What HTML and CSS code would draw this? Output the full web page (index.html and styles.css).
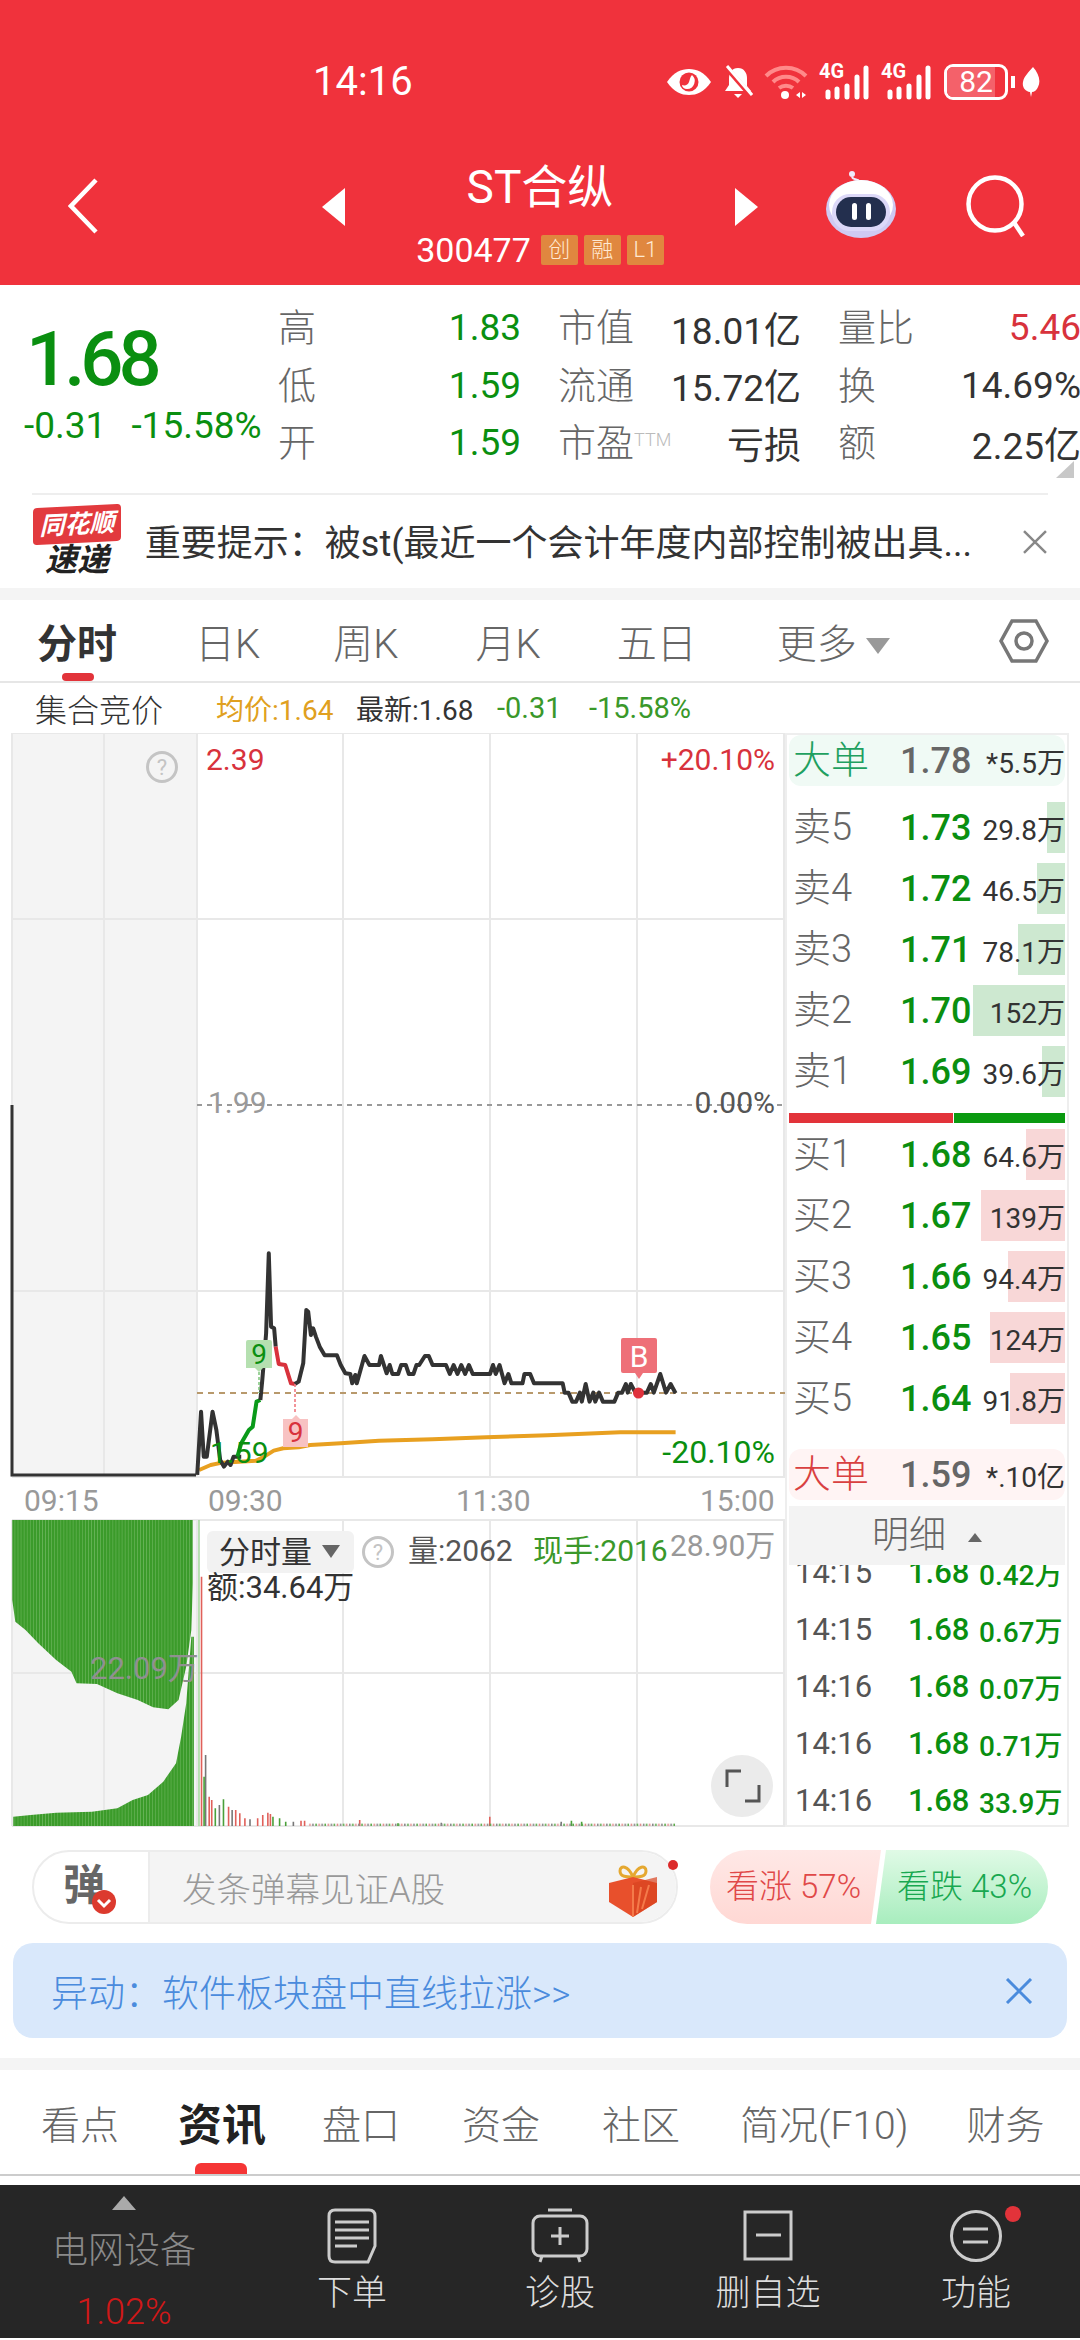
FILE: index.html
```html
<!DOCTYPE html>
<html lang="zh-CN">
<head>
  <meta charset="UTF-8" />
  <title>ST合纵 300477</title>
  <link rel="stylesheet" href="styles.css">
</head>
<body>

  <header class="top">
    <div class="status">
      <span class="clock">14:16</span>
      <div class="status-icons">
        <svg width="46" height="28" viewBox="0 0 46 28"><path d="M1 14C8 4 15 1 23 1s15 3 22 13c-7 10-14 13-22 13S8 24 1 14z" fill="#fff"/><circle cx="23" cy="14" r="9.5" fill="#f0323c"/><path d="M26 7a8 8 0 0 1-5 14c-3 0-5-2-5-4 3 1 6 0 7-3s1-5 3-7z" fill="#fff"/></svg>
        <svg width="30" height="34" viewBox="0 0 30 34"><path d="M15 3c6 0 9 5 9 10v8l4 5H2l4-6v-7c0-5 3-10 9-10z" fill="#fff"/><path d="M11 29h8l-4 4z" fill="#fff"/><path d="M2 1l27 31" stroke="#f0323c" stroke-width="5"/><path d="M4 1l25 29" stroke="#fff" stroke-width="3"/></svg>
        <svg width="44" height="34" viewBox="0 0 44 34"><g fill="none" stroke="#ff8a8a" stroke-width="4"><path d="M2 11c11-11 29-11 40 0"/><path d="M9 17c7-7 19-7 26 0"/><path d="M15 23c4-3 10-3 14 0"/></g><circle cx="21" cy="30" r="4" fill="#fff"/><path d="M32 30l4-3v6zM38 27l4 3-4 3z" fill="#fff"/></svg>
        <div class="signal"><span class="net">4G</span><svg width="51" height="36" viewBox="0 0 51 36"><g stroke="#fff" stroke-width="5" stroke-linecap="round"><path d="M9 28v5M18 25v8M28 22v11M38 13v20M47 4v29"/></g></svg></div>
        <div class="signal"><span class="net">4G</span><svg width="51" height="36" viewBox="0 0 51 36"><g stroke="#fff" stroke-width="5" stroke-linecap="round"><path d="M9 28v5M18 25v8M28 22v11M38 13v20M47 4v29"/></g></svg></div>
        <div class="battery"><span class="battery-fill"></span><span class="battery-num">82</span></div>
        <span class="battery-nub"></span>
        <svg width="18" height="30" viewBox="0 0 18 30"><path d="M11 0c6 7 8 14 5 20-1 3-4 5-6 5l-1 5-1-5C3 24 0 20 1 15 2 9 7 5 11 0z" fill="#fff"/></svg>
      </div>
    </div>
    <div class="nav">
      <svg class="nav-back" width="30" height="56" viewBox="0 0 30 56"><path d="M28 2L3 28l25 26" fill="none" stroke="#fff" stroke-width="4.5"/></svg>
      <span class="tri-left"></span>
      <div class="nav-title">
        <div class="stock-name">ST合纵</div>
        <div class="stock-code">300477<span class="tag">创</span><span class="tag">融</span><span class="tag">L1</span></div>
      </div>
      <span class="tri-right"></span>
      <svg class="robot" width="72" height="68" viewBox="0 0 72 68"><path d="M34 11c-1-2-6-1-7-4" fill="none" stroke="#efeafc" stroke-width="2"/><circle cx="27" cy="4" r="3" fill="#efeafc"/><ellipse cx="36" cy="39" rx="35" ry="29" fill="#cfcaf2"/><ellipse cx="36" cy="35" rx="32" ry="25" fill="#fff"/><rect x="7" y="24" width="58" height="37" rx="18" fill="#dcd8f8"/><rect x="11" y="27" width="50" height="30" rx="15" fill="#232f4e"/><rect x="27" y="33" width="5" height="17" rx="2.500" fill="#fff"/><rect x="41" y="33" width="5" height="17" rx="2.500" fill="#fff"/></svg>
      <svg class="search" width="60" height="62" viewBox="0 0 60 62"><circle cx="29" cy="29" r="26.5" fill="none" stroke="#fff" stroke-width="4.5"/><path d="M47 46l10 15" stroke="#fff" stroke-width="4.5"/></svg>
    </div>
  </header>

  <section class="quote">
    <div class="quote-main">
      <div class="last-price">1.68</div>
      <div class="last-change"><span>-0.31</span><span>-15.58%</span></div>
    </div>
    <div class="quote-grid">
      <div class="cell"><span>高</span><b class="green">1.83</b></div>
      <div class="cell"><span>市值</span><b>18.01亿</b></div>
      <div class="cell"><span>量比</span><b class="red">5.46</b></div>
      <div class="cell"><span>低</span><b class="green">1.59</b></div>
      <div class="cell"><span>流通</span><b>15.72亿</b></div>
      <div class="cell"><span>换</span><b>14.69%</b></div>
      <div class="cell"><span>开</span><b class="green">1.59</b></div>
      <div class="cell"><span>市盈<sup class="ttm">TTM</sup></span><b>亏损</b></div>
      <div class="cell"><span>额</span><b>2.25亿</b></div>
    </div>
    <span class="corner"></span>
  </section>

  <section class="notice">
    <div class="notice-logo">
      <div class="logo-top">同花顺</div>
      <div class="logo-bottom">速递</div>
    </div>
    <div class="notice-text">重要提示：被st(最近一个会计年度内部控制被出具...</div>
    <svg width="26" height="24" viewBox="0 0 26 24"><path d="M2 1l22 22M24 1L2 23" stroke="#888" stroke-width="2.5"/></svg>
  </section>

  <nav class="period-tabs">
    <span class="period active">分时</span>
    <span class="period w-ri">日K</span>
    <span class="period w-zhou">周K</span>
    <span class="period w-yue">月K</span>
    <span class="period w-wu">五日</span>
    <span class="period w-more">更多<i class="more-arrow"></i></span>
    <svg class="hex" width="50" height="46" viewBox="0 0 50 46"><path d="M13 3h24l11 20-11 20H13L2 23z" fill="none" stroke="#777" stroke-width="3.5"/><circle cx="25" cy="23" r="8" fill="none" stroke="#777" stroke-width="3.5"/></svg>
  </nav>

  <div class="auction-row">
    <span class="auction-title">集合竞价</span>
    <span class="avg">均价:1.64</span>
    <span class="latest">最新:1.68</span>
    <span class="chg-a">-0.31</span>
    <span class="chg-b">-15.58%</span>
  </div>

  <main class="board">
    <div class="chart">
      <svg class="chart-svg" viewBox="0 733 785 1094" width="785" height="1094">
        <defs>
          <pattern id="stripes" patternUnits="userSpaceOnUse" width="6" height="10">
            <rect width="6" height="10" fill="#6fb85f"/>
            <rect width="4.8" height="10" fill="#3b9b2a"/>
          </pattern>
          <pattern id="lowbars" patternUnits="userSpaceOnUse" width="18" height="10">
            <rect x="0" width="3" height="10" fill="#888"/>
            <rect x="6" width="3" height="10" fill="#5aa84a"/>
            <rect x="12" width="3" height="10" fill="#e08a8a"/>
          </pattern>
        </defs>

        <rect x="12" y="733" width="185" height="744" fill="#f4f4f4"/>
        <rect x="12" y="1520" width="185" height="306" fill="#f4f4f4"/>
        <g class="grid">
          <path d="M12 733H785M12 919H785M197 1291H785M12 1291H197M12 1477H785M12 1520H785M12 1673H785M12 1826H785"/>
          <path d="M104 733V1477M197 733V1477M343 733V1477M490 733V1477M637 733V1477M784 733V1477"/>
          <path d="M104 1520V1826M197 1520V1826M343 1520V1826M490 1520V1826M637 1520V1826M784 1520V1826"/>
          <path d="M12 733V1477M12 1520V1826"/>
        </g>
        <path class="zero-line" d="M197 1105H785"/>
        <path class="open-line" d="M197 1393H785"/>
        <path class="pre-line" d="M12 1105V1475H196"/>

        <g transform="translate(180 1200) scale(.3827 .3333)">
          <polyline class="line-avg" points="50,810 80,795 110,788 200,782 220,770 245,752 270,745 310,742 340,735 420,730 520,722 660,718 800,712 960,706 1040,702 1150,697 1295,697"/>
          <polyline class="line-price" points="45,825 55,635 62,770 70,770 85,635 95,690 105,780 115,800 125,785 132,795 140,770 160,770"/>
          <polyline class="line-green" points="150,770 160,730 180,690 190,680 200,605 210,600"/>
          <polyline class="line-price" points="210,600 215,540 225,400 232,160 238,380 246,385 250,440"/>
          <polyline class="line-red" points="250,440 258,492 275,495 290,550 300,552"/>
          <polyline class="line-price" points="300,552 310,545 322,490 330,330 335,335 342,405 348,385 355,410 365,440 378,466 410,466 420,495 432,520 445,522 450,550 458,525 462,550 482,468 495,495 520,495 525,468 540,520 548,495 555,522 570,522 578,495 590,495 598,522 610,522 618,495 625,495 640,468 650,468 660,495 695,495 705,522 715,495 725,522 735,495 745,522 755,495 765,522 810,522 818,495 825,522 835,495 848,550 858,522 866,550 895,550 900,522 915,522 925,550 1000,550 1005,578 1015,578 1025,605 1035,605 1045,578 1050,605 1060,552 1070,605 1080,578 1085,605 1095,578 1105,605 1135,605 1145,578 1155,578 1165,552 1170,578 1178,552 1190,578 1220,578 1230,552 1238,578 1255,522 1270,578 1282,552 1295,580"/>
        </g>

        <path class="tick-green" d="M259 1372V1393"/>
        <path class="tick-red" d="M295 1384V1412"/>
        <path d="M246 1342q0-2 2-2h22q2 0 2 2v26h-9l-4 4-4-4h-9z" fill="#b5e0b0"/>
        <text class="t-tag green-t" x="259" y="1364">9</text>
        <path d="M283 1419h9l4-4 4 4h8v28h-25z" fill="#f8c2c2"/>
        <text class="t-tag red-t" x="295.500" y="1442">9</text>
        <path d="M621 1340q0-2 2-2h32q2 0 2 2v31q0 2-2 2h-12l-4 6-4-6h-12q-2 0-2-2z" fill="#ee7078"/>
        <text class="t-b" x="639" y="1367">B</text>
        <circle cx="638.500" cy="1393" r="5.500" fill="#e0323c"/>

        <circle class="help" cx="162" cy="767" r="14.500"/>
        <text class="t-help" x="162" y="775">?</text>
        <text class="t-price red-t" x="206" y="770">2.39</text>
        <text class="t-price red-t end" x="775" y="770">+20.10%</text>
        <text class="t-price gray-t" x="208" y="1113">1.99</text>
        <text class="t-price dark-t end" x="775" y="1113">0.00%</text>
        <text class="t-price green-t" x="210" y="1463">1.59</text>
        <text class="t-price t-wide green-t end" x="775" y="1463">-20.10%</text>

        <text class="t-axis" x="24" y="1511">09:15</text>
        <text class="t-axis" x="208" y="1511">09:30</text>
        <text class="t-axis" x="456" y="1511">11:30</text>
        <text class="t-axis" x="700" y="1511">15:00</text>

        <g transform="translate(0 1480) scale(.5102 .3333)">
          <path fill="url(#stripes)" d="M24 120H378V310L375 450 365 560 350 660 330 688 300 682 270 660 230 640 190 612 150 610 140 575 110 540 75 490 50 450 30 425 24 360z"/>
          <path fill="url(#stripes)" d="M26 1010L60 1005 110 998 180 995 230 985 260 960 290 945 320 905 345 850 355 770 365 670 375 470 380 470V1038H26z"/>
          <path class="bar-line" stroke="#a8d8a0" d="M390 120V1038"/>
          <path class="bar-line" stroke="#e0605a" d="M395 290V1038M410 950V1038M415 960V1038M448 980V1038M462 990V1038M470 1000V1038M480 1015V1038M505 1015V1038M515 1005V1038M525 998V1038M530 1002V1038M590 1022V1038M597 1022V1038M705 1020V1038M960 1010V1038"/>
          <path class="bar-line" stroke="#777" d="M403 825V1038M430 975V1038M455 990V1038M490 1018V1038M575 1025V1038M865 1028V1038M1100 1025V1038"/>
          <path class="bar-line" stroke="#4aa03a" d="M400 890V1038M422 985V1038M438 958V1038M535 1010V1038M548 1015V1038M560 1025V1038M780 1030V1038M1120 1022V1038M1140 1025V1038"/>
          <rect x="605" y="1031" width="720" height="7" fill="url(#lowbars)"/>
        </g>

        <text class="t-over" x="90" y="1679">22.09万</text>
        <rect class="chip" x="207" y="1531" width="147" height="42" rx="6"/>
        <text class="t-vol" x="219" y="1563">分时量</text>
        <path d="M322 1545h18l-9 13z" fill="#666"/>
        <circle class="help" cx="378" cy="1552" r="14.500"/>
        <text class="t-help" x="378" y="1560">?</text>
        <text class="t-small" x="408" y="1561">量:2062</text>
        <text class="t-small t-green" x="533" y="1561">现手:2016</text>
        <text class="t-small gray-t" x="670" y="1556">28.90万</text>
        <text class="t-vol" x="207" y="1598">额:34.64万</text>

        <circle cx="742" cy="1786" r="31" fill="#ebebeb"/>
        <path class="expand" d="M727 1787V1771H741M759 1785V1801H745"/>
      </svg>
    </div>

    <aside class="book">
      <div class="big-order big-green"><span class="lab">大单</span><span class="px gray">1.78</span><span class="vol">*5.5万</span></div>

      <div class="sell-list">
        <div class="level"><i class="bar bar-sell" style="width:18px"></i><span class="lab">卖5</span><span class="px">1.73</span><span class="vol">29.8万</span></div>
        <div class="level"><i class="bar bar-sell" style="width:28px"></i><span class="lab">卖4</span><span class="px">1.72</span><span class="vol">46.5万</span></div>
        <div class="level"><i class="bar bar-sell" style="width:47px"></i><span class="lab">卖3</span><span class="px">1.71</span><span class="vol">78.1万</span></div>
        <div class="level"><i class="bar bar-sell" style="width:92px"></i><span class="lab">卖2</span><span class="px">1.70</span><span class="vol">152万</span></div>
        <div class="level"><i class="bar bar-sell" style="width:23px"></i><span class="lab">卖1</span><span class="px">1.69</span><span class="vol">39.6万</span></div>
      </div>

      <div class="ratio"><span class="ratio-red"></span><span class="ratio-green"></span></div>

      <div class="buy-list">
        <div class="level"><i class="bar bar-buy" style="width:39px"></i><span class="lab">买1</span><span class="px">1.68</span><span class="vol">64.6万</span></div>
        <div class="level"><i class="bar bar-buy" style="width:84px"></i><span class="lab">买2</span><span class="px">1.67</span><span class="vol">139万</span></div>
        <div class="level"><i class="bar bar-buy" style="width:57px"></i><span class="lab">买3</span><span class="px">1.66</span><span class="vol">94.4万</span></div>
        <div class="level"><i class="bar bar-buy" style="width:75px"></i><span class="lab">买4</span><span class="px">1.65</span><span class="vol">124万</span></div>
        <div class="level"><i class="bar bar-buy" style="width:55px"></i><span class="lab">买5</span><span class="px">1.64</span><span class="vol">91.8万</span></div>
      </div>

      <div class="big-order big-red"><span class="lab">大单</span><span class="px gray">1.59</span><span class="vol">*.10亿</span></div>
      <div class="detail-head">明细<i class="detail-arrow"></i></div>

      <div class="ticks">
        <div class="tick"><span class="tm">14:15</span><span class="tp">1.68</span><span class="tv">0.42万</span></div>
        <div class="tick"><span class="tm">14:15</span><span class="tp">1.68</span><span class="tv">0.67万</span></div>
        <div class="tick"><span class="tm">14:16</span><span class="tp">1.68</span><span class="tv">0.07万</span></div>
        <div class="tick"><span class="tm">14:16</span><span class="tp">1.68</span><span class="tv">0.71万</span></div>
        <div class="tick"><span class="tm">14:16</span><span class="tp">1.68</span><span class="tv">33.9万</span></div>
      </div>
    </aside>
  </main>

  <section class="danmu-row">
    <div class="danmu">
      <div class="danmu-left">
        <span class="danmu-char">弹</span>
        <svg class="danmu-check" width="24" height="24" viewBox="0 0 24 24"><circle cx="12" cy="12" r="12" fill="#dc3a2e"/><path d="M6 10l6 6 6-6" fill="none" stroke="#fff" stroke-width="3"/></svg>
      </div>
      <div class="danmu-input">
        <span>发条弹幕见证A股</span>
        <svg width="50" height="52" viewBox="0 0 50 52"><path d="M25 12C20 0 12 0 12 6s7 6 13 6c6 0 13 0 13-6s-8-6-13 6z" fill="none" stroke="#e5a830" stroke-width="3"/><path d="M1 18l24-6 24 6v19L25 52 1 37z" fill="#e8502c"/><path d="M25 18l24-6v25L25 52z" fill="#d8431f" opacity=".7"/><path d="M25 20v32M33 22l-4 26M41 20l-7 24" stroke="#f47a4a" stroke-width="2"/></svg>
      </div>
      <span class="danmu-dot"></span>
    </div>
    <div class="vote">
      <span class="vote-up">看涨 57%</span>
      <span class="vote-down">看跌 43%</span>
    </div>
  </section>

  <section class="alert">
    <span>异动：软件板块盘中直线拉涨&gt;&gt;</span>
    <svg width="28" height="26" viewBox="0 0 28 26"><path d="M2 1l24 24M26 1L2 25" stroke="#4a8bdd" stroke-width="3"/></svg>
  </section>

  <nav class="info-tabs">
    <span class="info t-a">看点</span>
    <span class="info t-b-tab active">资讯</span>
    <span class="info t-c">盘口</span>
    <span class="info t-d">资金</span>
    <span class="info t-e">社区</span>
    <span class="info t-f">简况(F10)</span>
    <span class="info t-g">财务</span>
  </nav>

  <footer class="bottom">
    <div class="sector">
      <span class="sector-arrow"></span>
      <span class="sector-name">电网设备</span>
      <span class="sector-pct">1.02%</span>
    </div>
    <div class="action">
      <svg width="50" height="56" viewBox="0 0 50 56"><path class="ic" d="M8 2h34q6 0 6 6v30l-7 16H8q-6 0-6-6V8q0-6 6-6z"/><path class="ic" d="M8 14h34M8 22h34M8 30h34M8 38h22"/></svg>
      <span>下单</span>
    </div>
    <div class="action">
      <svg width="60" height="56" viewBox="0 0 60 56"><path class="ic" d="M18 2h24"/><rect class="ic" x="3" y="8" width="54" height="40" rx="7"/><path class="ic" d="M30 19v18M21 28h18M12 48l-2 6M48 48l2 6"/></svg>
      <span>诊股</span>
    </div>
    <div class="action">
      <svg width="50" height="56" viewBox="0 0 50 56"><rect class="ic" x="2" y="4" width="46" height="47"/><path class="ic" d="M13 27h25"/></svg>
      <span>删自选</span>
    </div>
    <div class="action">
      <svg width="54" height="56" viewBox="0 0 54 56"><circle class="ic" cx="27" cy="28" r="24.500"/><path class="ic" d="M14 21h25M14 34h25"/></svg>
      <span>功能</span>
      <i class="action-dot"></i>
    </div>
  </footer>

</body>
</html>
```

FILE: styles.css
```css
* {
  box-sizing: border-box;
}
html, body {
  margin: 0;
  padding: 0;
}
body {
  width: 1080px;
  height: 2340px;
  overflow: hidden;
  background: #fff;
  font-family: Roboto, "Noto Sans CJK SC", sans-serif;
  color: #333;
}

/* header */
.top {
  height: 285px;
  background: #f0323c;
  color: #fff;
}
.status {
  display: flex;
  align-items: center;
  height: 64px;
  padding: 50px 40px 0 313px;
  box-sizing: content-box;
}
.clock {
  font-size: 40px;
  line-height: 64px;
}
.status-icons {
  margin-left: auto;
  display: flex;
  align-items: center;
  gap: 11px;
}
.signal {
  position: relative;
  width: 51px;
  height: 36px;
}
.signal svg {
  display: block;
}
.net {
  position: absolute;
  left: 0;
  top: -3px;
  font-size: 20px;
  line-height: 20px;
  font-weight: 700;
}
.battery {
  position: relative;
  width: 64px;
  height: 36px;
  border: 3px solid #fff;
  border-radius: 9px;
  margin-left: 1px;
  text-align: center;
  overflow: hidden;
}
.battery-fill {
  position: absolute;
  left: 0;
  top: 0;
  bottom: 0;
  width: 82%;
  background: #f4616a;
}
.battery-num {
  position: relative;
  font-size: 30px;
  line-height: 30px;
  display: block;
}
.battery-nub {
  width: 4px;
  height: 12px;
  background: #fff;
  margin-left: -8px;
  margin-right: -4px;
}
.nav {
  display: flex;
  align-items: center;
  height: 171px;
  padding-left: 68px;
}
.nav-back {
  margin-top: 12px;
}
.tri-left, .tri-right {
  width: 0;
  height: 0;
  margin-top: 15px;
  border-top: 19px solid transparent;
  border-bottom: 19px solid transparent;
}
.tri-left {
  margin-left: 224px;
  border-right: 23px solid #fff;
}
.tri-right {
  border-left: 23px solid #fff;
}
.nav-title {
  width: 390px;
  margin-top: 26px;
  text-align: center;
}
.stock-name {
  font-size: 46px;
  line-height: 56px;
}
.stock-code {
  display: flex;
  align-items: center;
  justify-content: center;
  margin-top: 19px;
  font-size: 34px;
  line-height: 32px;
}
.tag {
  width: 37px;
  height: 30px;
  margin-left: 6px;
  background: #e0873f;
  border-radius: 2px;
  font-size: 22px;
  line-height: 30px;
  font-weight: 300;
  color: #ffe9d2;
}
.tag:first-of-type {
  margin-left: 10px;
}
.robot {
  margin-left: 67px;
  margin-top: 8px;
}
.search {
  margin-left: 69px;
  margin-top: 12px;
}

/* quote */
.quote {
  position: relative;
  display: flex;
  height: 208px;
  padding-top: 14px;
}
.quote-main {
  width: 278px;
  padding-left: 24px;
}
.last-price {
  font-size: 76px;
  line-height: 80px;
  font-weight: 500;
  color: #0a8f10;
  padding: 20px 0 0 2px;
  letter-spacing: -5px;
}
.last-change {
  display: flex;
  gap: 25px;
  margin-top: 7px;
  font-size: 37px;
  line-height: 40px;
  color: #0a8f10;
}
.quote-grid {
  display: grid;
  grid-template-columns: 240px 240px 240px;
  column-gap: 40px;
  grid-auto-rows: 57.500px;
  width: 800px;
  flex: none;
}
.cell {
  display: flex;
  align-items: center;
  justify-content: space-between;
  font-size: 37px;
  white-space: nowrap;
}
.cell span {
  padding-bottom: 6px;
  font-size: 38px;
  color: #666;
  font-weight: 300;
}
.cell b {
  margin-right: -3px;
  font-weight: 400;
  color: #333;
}
.cell .green {
  color: #0a8f10;
}
.cell .red {
  color: #d8323c;
}
.ttm {
  font-size: 18px;
  line-height: 0;
  color: #bbb;
  vertical-align: 10px;
}
.corner {
  position: absolute;
  right: 6px;
  bottom: 15px;
  width: 0;
  height: 0;
  border-left: 18px solid transparent;
  border-bottom: 17px solid #c8c8c8;
}

/* notice */
.notice {
  display: flex;
  align-items: center;
  height: 95px;
  margin: 0 32px;
  border-top: 2px solid #eee;
  position: relative;
}
.notice-logo {
  width: 88px;
  margin-left: 1px;
  text-align: center;
  font-style: italic;
  font-weight: 700;
}
.logo-top {
  height: 37px;
  background: #e23a3e;
  border-radius: 4px;
  color: #fff;
  font-size: 25px;
  line-height: 37px;
  transform: skewY(-3deg);
  white-space: nowrap;
}
.logo-bottom {
  color: #222;
  font-size: 32px;
  line-height: 34px;
}
.notice-text {
  margin-left: 24px;
  margin-bottom: 4px;
  width: 880px;
  font-size: 36px;
  color: #333;
  white-space: nowrap;
}
.notice svg {
  margin-left: -1px;
}

/* period tabs */
.period-tabs {
  position: relative;
  display: flex;
  align-items: center;
  height: 95px;
  border-top: 12px solid #f4f4f4;
  border-bottom: 2px solid #e6e6e6;
  padding-left: 37px;
  font-size: 40px;
  color: #666;
  font-weight: 300;
}
.period {
  white-space: nowrap;
}
.period.active {
  font-weight: 700;
  color: #333;
}
.period.active::after {
  content: "";
  position: absolute;
  left: 62px;
  bottom: 0;
  width: 32px;
  height: 8px;
  border-radius: 4px;
  background: #e2333a;
}
.w-ri { margin-left: 78px; }
.w-zhou { margin-left: 73px; }
.w-yue { margin-left: 77px; }
.w-wu { margin-left: 76px; }
.w-more { margin-left: 80px; }
.more-arrow {
  display: inline-block;
  margin-left: 9px;
  border-left: 12px solid transparent;
  border-right: 12px solid transparent;
  border-top: 16px solid #999;
  vertical-align: 4px;
}
.hex {
  margin-left: auto;
  margin-right: 31px;
}

/* auction row */
.auction-row {
  display: flex;
  align-items: center;
  height: 50px;
  padding-left: 35px;
  font-size: 28px;
  white-space: nowrap;
}
.auction-title {
  font-size: 32px;
  font-weight: 300;
  width: 181px;
}
.avg {
  color: #e0a020;
  width: 140px;
}
.latest {
  color: #333;
  width: 141px;
}
.chg-a {
  font-size: 29px;
  color: #3a982a;
  width: 92px;
}
.chg-b {
  font-size: 29px;
  color: #3a982a;
}

/* board */
.board {
  display: flex;
  height: 1094px;
}
.chart {
  position: relative;
  width: 785px;
}
.chart-svg {
  position: absolute;
  left: 0;
  top: 0;
}
.grid path {
  stroke: #e8e8e8;
  stroke-width: 2;
  fill: none;
}
.zero-line {
  stroke: #999;
  stroke-width: 2;
  stroke-dasharray: 5 5;
  fill: none;
}
.open-line {
  stroke: #b8996c;
  stroke-width: 2;
  stroke-dasharray: 6 5;
  fill: none;
}
.pre-line {
  stroke: #333;
  stroke-width: 3;
  fill: none;
}
.line-price, .line-green, .line-red, .line-avg {
  fill: none;
  stroke-width: 4;
  vector-effect: non-scaling-stroke;
  stroke-linejoin: round;
}
.line-price { stroke: #333; }
.line-green { stroke: #0a9a1a; }
.line-red { stroke: #d8323c; }
.line-avg { stroke: #e8a020; }
.tick-green, .tick-red {
  stroke-width: 1.500;
  stroke-dasharray: 3 2;
  fill: none;
}
.tick-green { stroke: #7cc47a; }
.tick-red { stroke: #ee7078; }
.bar-line {
  stroke-width: 1.600;
  fill: none;
  vector-effect: non-scaling-stroke;
}
.chart-svg text {
  font-family: Roboto, "Noto Sans CJK SC", sans-serif;
}
.t-tag {
  font-size: 28px;
  text-anchor: middle;
}
.t-b {
  font-size: 30px;
  fill: #fff;
  text-anchor: middle;
}
.t-price {
  font-size: 30px;
}
.t-price.t-wide {
  font-size: 32px;
}
.end {
  text-anchor: end;
}
.red-t { fill: #d8323c; }
.green-t { fill: #0a8f10; }
.gray-t { fill: #999; }
.dark-t { fill: #555; }
.t-axis {
  font-size: 30px;
  fill: #999;
}
.t-over {
  font-size: 31px;
  fill: #909090;
}
.chip {
  fill: #f2f2f2;
}
.t-vol {
  font-size: 31px;
  fill: #333;
}
.t-small {
  font-size: 30px;
  fill: #555;
}
.t-small.t-green {
  fill: #3a982a;
}
.t-small.gray-t {
  fill: #999;
}
.help {
  fill: none;
  stroke: #c4c4c4;
  stroke-width: 3;
}
.t-help {
  font-size: 22px;
  fill: #c4c4c4;
  text-anchor: middle;
}
.expand {
  fill: none;
  stroke: #555;
  stroke-width: 3;
}

/* order book */
.book {
  width: 284px;
  border: 2px solid #eee;
  padding: 0 2px;
  display: flex;
  flex-direction: column;
  overflow: hidden;
}
.big-order, .level {
  position: relative;
  display: flex;
  align-items: center;
  height: 51px;
  white-space: nowrap;
}
.lab {
  position: relative;
  width: 111px;
  padding: 0 0 8px 4px;
  font-size: 38px;
  font-weight: 300;
  color: #666;
}
.px {
  position: relative;
  width: 70px;
  font-size: 36px;
  font-weight: 500;
  color: #0a8f10;
}
.px.gray {
  color: #666;
}
.vol {
  position: relative;
  flex: 1;
  text-align: right;
  font-size: 28px;
  color: #333;
}
.big-order {
  border-radius: 12px;
}
.big-green {
  background: #f0faf5;
}
.big-green .lab {
  color: #1fa060;
}
.big-red {
  background: #fff4f4;
  margin-top: 25px;
}
.big-red .lab {
  color: #d94040;
}
.sell-list, .buy-list {
  display: flex;
  flex-direction: column;
  gap: 10px;
}
.sell-list {
  margin-top: 16px;
}
.bar {
  position: absolute;
  right: 0;
  top: 0;
  bottom: 0;
}
.bar-sell {
  background: #cde8d0;
}
.bar-buy {
  background: #f8d7d7;
}
.ratio {
  display: flex;
  gap: 1px;
  height: 10px;
  margin-top: 16px;
  margin-bottom: 6px;
}
.ratio-red {
  width: 164px;
  background: #e2333a;
}
.ratio-green {
  flex: 1;
  background: #0a9a10;
}
.detail-head {
  flex: none;
  height: 59px;
  margin-top: 6px;
  background: #f3f3f3;
  text-align: center;
  font-size: 37px;
  line-height: 59px;
  font-weight: 300;
  color: #666;
  position: relative;
  z-index: 1;
}
.detail-arrow {
  display: inline-block;
  margin-left: 22px;
  border-left: 7px solid transparent;
  border-right: 7px solid transparent;
  border-bottom: 9px solid #666;
  vertical-align: 6px;
}
.ticks {
  flex: 1;
  min-height: 0;
  display: flex;
  flex-direction: column;
  justify-content: flex-end;
  margin-bottom: -4px;
  overflow: hidden;
}
.tick {
  flex: none;
  display: flex;
  align-items: center;
  height: 57px;
  white-space: nowrap;
}
.tm {
  width: 119px;
  padding-left: 6px;
  font-size: 31px;
  color: #555;
}
.tp {
  width: 71px;
  font-size: 31px;
  font-weight: 500;
  color: #0a8f10;
}
.tv {
  font-size: 28px;
  font-weight: 500;
  color: #0a8f10;
}

/* danmu */
.danmu-row {
  display: flex;
  gap: 32px;
  height: 74px;
  margin-top: 23px;
  padding-left: 32px;
}
.danmu {
  position: relative;
  display: flex;
  width: 646px;
  border: 2px solid #ececec;
  border-radius: 37px;
}
.danmu-left {
  position: relative;
  width: 116px;
  padding-left: 29px;
  border-right: 2px solid #ececec;
  font-size: 42px;
  font-weight: 700;
  color: #666;
  line-height: 68px;
}
.danmu-check {
  position: absolute;
  left: 58px;
  top: 38px;
}
.danmu-input {
  flex: 1;
  display: flex;
  align-items: center;
  justify-content: space-between;
  padding: 0 18px 0 32px;
  background: #f4f4f4;
  border-radius: 0 36px 36px 0;
  font-size: 34.500px;
  font-weight: 300;
  color: #999;
}
.danmu-input svg {
  margin-top: 8px;
}
.danmu-dot {
  position: absolute;
  right: -2px;
  top: 8px;
  width: 10px;
  height: 10px;
  border-radius: 50%;
  background: #dc2a2a;
}
.vote {
  position: relative;
  width: 338px;
  border-radius: 37px;
  overflow: hidden;
  font-size: 33px;
  line-height: 74px;
  font-weight: 300;
  white-space: nowrap;
}
.vote-up, .vote-down {
  position: absolute;
  left: 0;
  right: 0;
  top: 0;
  bottom: 0;
}
.vote-up {
  padding-left: 16px;
  color: #e04848;
  background: linear-gradient(#ffe8e6, #ffd8d4);
  clip-path: polygon(0 0, 171px 0, 161px 100%, 0 100%);
}
.vote-down {
  padding-left: 187px;
  color: #18a850;
  background: linear-gradient(#e0fae6, #a8edbe);
  clip-path: polygon(176px 0, 100% 0, 100% 100%, 166px 100%);
}

/* alert */
.alert {
  display: flex;
  align-items: center;
  justify-content: space-between;
  height: 95px;
  margin: 19px 13px 0;
  padding: 0 34px 0 38px;
  background: #d9e8fb;
  border-radius: 20px;
  font-size: 37px;
  font-weight: 300;
  color: #4a8bdd;
}

/* info tabs */
.info-tabs {
  position: relative;
  display: flex;
  align-items: center;
  height: 104px;
  margin-top: 20px;
  border-top: 12px solid #f4f4f4;
  border-bottom: 2px solid #ccc;
  box-sizing: content-box;
  font-size: 39px;
  font-weight: 300;
  color: #666;
  padding-left: 41px;
  white-space: nowrap;
}
.info.active {
  font-size: 44px;
  font-weight: 700;
  color: #222;
}
.info.active::after {
  content: "";
  position: absolute;
  left: 195px;
  bottom: 0;
  width: 52px;
  height: 11px;
  border-radius: 6px 6px 0 0;
  background: #f53535;
}
.t-b-tab { margin-left: 59px; }
.t-c { margin-left: 56px; }
.t-d { margin-left: 62px; }
.t-e { margin-left: 62px; }
.t-f { margin-left: 60px; }
.t-g { margin-left: 58px; }

/* bottom bar */
.bottom {
  display: grid;
  grid-template-columns: 248px repeat(4, 208px);
  height: 153px;
  margin-top: 9px;
  background: #262626;
  color: #ddd;
}
.sector {
  display: flex;
  flex-direction: column;
  align-items: center;
  padding-top: 11px;
}
.sector-arrow {
  width: 0;
  height: 0;
  border-left: 12px solid transparent;
  border-right: 12px solid transparent;
  border-bottom: 14px solid #aaa;
}
.sector-name {
  margin-top: 17px;
  font-size: 36px;
  line-height: 48px;
  font-weight: 300;
  color: #8a8a8a;
}
.sector-pct {
  margin-top: 16px;
  font-size: 36px;
  line-height: 42px;
  font-weight: 300;
  color: #d01818;
}
.action {
  position: relative;
  display: flex;
  flex-direction: column;
  align-items: center;
  padding-top: 23px;
  font-size: 35px;
  font-weight: 300;
  line-height: 42px;
}
.action span {
  margin-top: 9px;
}
.ic {
  fill: none;
  stroke: #ccc;
  stroke-width: 3;
}
.action-dot {
  position: absolute;
  left: 133px;
  top: 21px;
  width: 16px;
  height: 16px;
  border-radius: 50%;
  background: #e2333a;
}
```
